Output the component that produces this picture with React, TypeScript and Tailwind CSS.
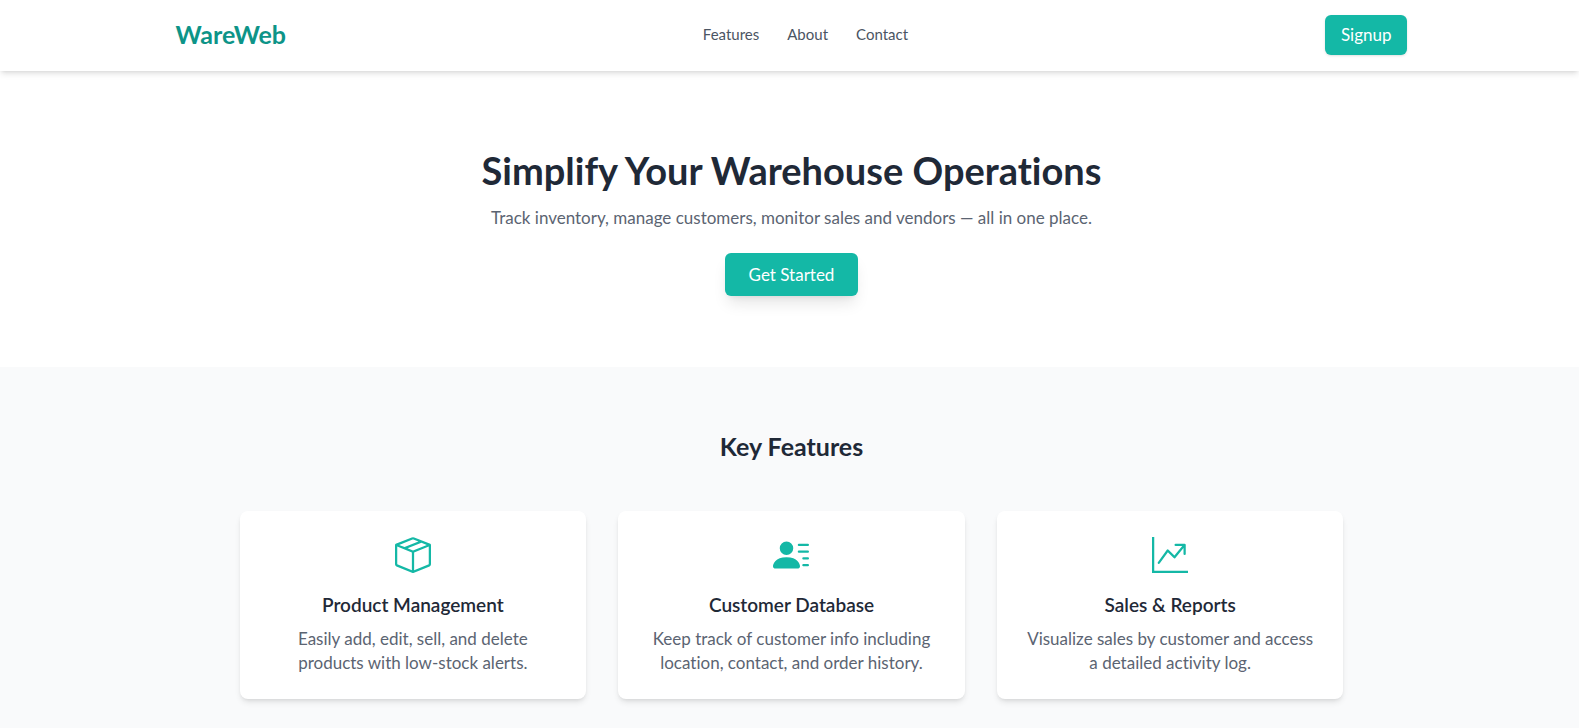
import type { IconType } from "react-icons";
import { BsBoxSeam, BsGraphUpArrow, BsPersonLinesFill } from "react-icons/bs";

type Feature = { title: string; text: string; Icon: IconType };

const features: Feature[] = [
  {
    title: "Product Management",
    text: "Easily add, edit, sell, and delete products with low-stock alerts.",
    Icon: BsBoxSeam,
  },
  {
    title: "Customer Database",
    text: "Keep track of customer info including location, contact, and order history.",
    Icon: BsPersonLinesFill,
  },
  {
    title: "Sales & Reports",
    text: "Visualize sales by customer and access a detailed activity log.",
    Icon: BsGraphUpArrow,
  },
];

const links = ["Features", "About", "Contact"];

function Header() {
  return (
    <header className="relative z-10 bg-white pl-1 shadow-md">
      <div className="mx-auto flex max-w-7xl items-center justify-between px-6 pt-[15px] pb-4">
        <a href="#" className="pb-[2px] text-[25px] leading-8 font-bold text-[#0d9488]">
          WareWeb
        </a>
        <nav className="flex gap-7 pb-[2px] text-[15px] leading-5 text-[#4b5563]">
          {links.map((link) => (
            <a key={link} href={`#${link.toLowerCase()}`}>
              {link}
            </a>
          ))}
        </nav>
        <button
          type="button"
          className="rounded-md bg-[#14b8a6] px-4 py-2 text-[17px] leading-6 text-white shadow-sm"
        >
          Signup
        </button>
      </div>
    </header>
  );
}

function Hero() {
  return (
    <section className="bg-white pt-[79px] pr-6 pb-[71px] pl-7 text-center">
      <h1 className="text-[38px] leading-10 font-bold text-[#1f2937]">
        Simplify Your Warehouse Operations
      </h1>
      <p className="mt-4 text-[17px] leading-6 text-[#5b6472]">
        Track inventory, manage customers, monitor sales and vendors — all in one place.
      </p>
      <div className="mt-[23px] flex justify-center">
        <a
          href="#signup"
          className="rounded-md bg-[#14b8a6] px-6 pt-[10px] pb-[9px] text-[17px] leading-6 text-white shadow-lg"
        >
          Get Started
        </a>
      </div>
    </section>
  );
}

function FeatureCard({ title, text, Icon }: Feature) {
  return (
    <article className="rounded-lg bg-white p-6 text-center shadow-md">
      <div className="mb-4 flex h-10 items-center justify-center text-4xl text-[#14b8a6]">
        <Icon aria-hidden="true" />
      </div>
      <h3 className="mb-2 text-[19px] leading-7 font-semibold text-[#1f2937]">{title}</h3>
      <p className="text-[17px] leading-6 text-[#5b6472]">{text}</p>
    </article>
  );
}

export default function App() {
  return (
    <div className="min-h-screen bg-[#f9fafb] font-['Lato',sans-serif] [font-variant-ligatures:no-common-ligatures]">
      <Header />
      <main>
        <Hero />
        <section id="features" className="pt-[63px] pb-16 pl-1">
          <div className="mx-auto max-w-6xl px-6">
            <h2 className="mb-[49px] text-center text-[25px] leading-8 font-bold text-[#1f2937]">
              Key Features
            </h2>
            <div className="grid gap-8 md:grid-cols-3">
              {features.map((feature) => (
                <FeatureCard key={feature.title} {...feature} />
              ))}
            </div>
          </div>
        </section>
      </main>
    </div>
  );
}
